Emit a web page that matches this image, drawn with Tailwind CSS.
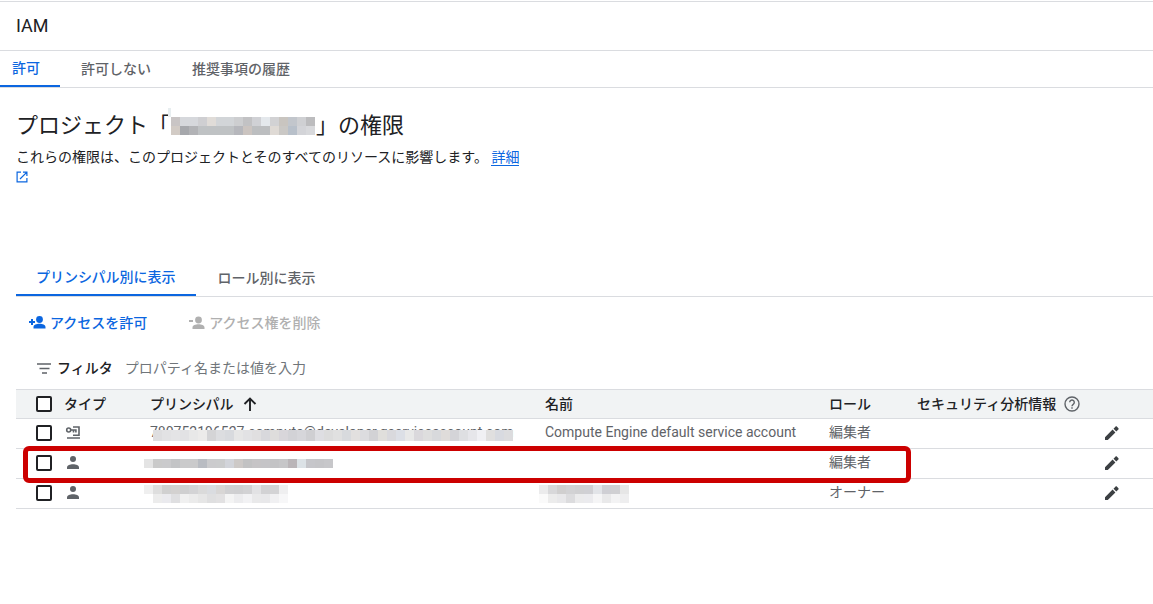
<!DOCTYPE html>
<html lang="ja">
<head>
  <meta charset="utf-8">
  <meta name="viewport" content="width=device-width, initial-scale=1">
  <title>IAM</title>
  <script src="https://cdn.jsdelivr.net/npm/@tailwindcss/browser@4"></script>
</head>
<body class="bg-white font-[Roboto,'Noto_Sans_CJK_JP',sans-serif] text-sm text-[#202124]">

  <header class="mt-px flex h-[50px] items-center border-y border-[#dadce0] px-4">
    <h1 class="text-lg">IAM</h1>
  </header>

  <nav class="flex h-[37px] gap-px border-b border-[#dadce0] font-medium text-[#5f6368]">
    <a href="#allow" class="-ml-2 flex items-center border-b-2 border-[#0b66e0] px-5 text-[#0b66e0]">許可</a>
    <a href="#deny" class="flex items-center px-5">許可しない</a>
    <a href="#history" class="flex items-center px-5">推奨事項の履歴</a>
  </nav>

  <main class="pl-4">
    <h2 class="mt-[22px] flex h-8 items-center text-[22px]">
      プロジェクト「<svg data-mosaic="project" class="-mr-px ml-px h-[18px] w-[146px] overflow-visible"></svg>」の権限
    </h2>
    <p class="mt-[5px] leading-5">
      これらの権限は、このプロジェクトとそのすべてのリソースに影響します。
      <a href="#details" class="text-[#0b66e0]"><span class="border-b border-[#0b66e0]">詳細</span>
        <svg class="mt-1 block size-3" viewBox="0 0 12 12" fill="none" stroke="currentColor" stroke-width="1.2">
          <path d="M5 1.1H1.1v9.8h9.8V7M7 1.1h3.9V5M10.7 1.3 4 8"/>
        </svg>
      </a>
    </p>

    <nav class="mt-[77px] flex h-[37px] gap-0.5 border-b border-[#dadce0] font-medium text-[#5f6368]">
      <a href="#principals" class="flex items-center border-b-2 border-[#0b66e0] px-5 text-[#0b66e0]">プリンシパル別に表示</a>
      <a href="#roles" class="flex items-center px-5">ロール別に表示</a>
    </nav>

    <div class="flex h-[52px] items-center gap-10 pl-3 font-medium">
      <button type="button" class="flex items-center gap-1 text-[#0b66e0]">
        <svg class="h-4 w-[18px]" viewBox="0 0 18 16" fill="currentColor">
          <circle cx="11.5" cy="4.5" r="3.4"/>
          <path d="M5.5 13.500v-1.600c0-2 3-3.200 6-3.200s6 1.200 6 3.200v1.600zM3 4h2v2h2v2H5v2H3V8H1V6h2z"/>
        </svg>
        アクセスを許可
      </button>
      <button type="button" disabled class="flex items-center gap-1 text-[#b0b0b0]">
        <svg class="h-4 w-[18px]" viewBox="0 0 18 16" fill="currentColor">
          <circle cx="11.5" cy="5" r="3.4"/>
          <path d="M5.5 14v-1.6c0-2 3-3.2 6-3.2s6 1.2 6 3.2V14zM2 5h4v2H2z"/>
        </svg>
        アクセス権を削除
      </button>
    </div>

    <div class="flex h-10 items-center pb-0.5 pl-5">
      <svg class="mr-1 h-4 w-[17px]" viewBox="0 0 17 16" fill="none" stroke="#5f6368" stroke-width="1.6">
        <path d="M1 4h14M3.5 8.5h10M6 13h5"/>
      </svg>
      <label for="filter" class="font-medium">フィルタ</label>
      <input id="filter" type="text" placeholder="プロパティ名または値を入力" class="ml-3 grow outline-none placeholder:text-[#70757a]">
    </div>

    <div class="relative">
      <table class="w-full table-fixed border-collapse text-left leading-5">
        <colgroup>
          <col class="w-[48px]"><col class="w-[86px]"><col class="w-[395px]"><col class="w-[284px]">
          <col class="w-[88px]"><col class="w-[187px]"><col>
        </colgroup>
        <thead>
          <tr class="h-[29px] border-y border-[#dadce0] bg-[#f1f3f4]">
            <th class="pl-5"><input type="checkbox" aria-label="すべて選択" class="block size-4 appearance-none rounded-xs border-2 border-[#202124] bg-white"></th>
            <th class="font-medium">タイプ</th>
            <th class="font-medium">
              <div class="flex items-center gap-2">プリンシパル
                <svg class="size-4" viewBox="0 0 16 16" fill="none" stroke="currentColor" stroke-width="1.9"><path d="M8 15V3M2.5 8 8 2.5 13.5 8"/></svg>
              </div>
            </th>
            <th class="font-medium">名前</th>
            <th class="font-medium">ロール</th>
            <th class="font-medium">
              <div class="flex items-center gap-2">セキュリティ分析情報
                <svg class="size-4" viewBox="0 0 16 16" fill="none" stroke="#5f6368" stroke-width="1.4">
                  <circle cx="8" cy="8" r="7"/>
                  <path d="M5.7 6.3a2.3 2.3 0 1 1 3.5 2C8.3 8.9 8 9.2 8 10.2M8 11.3v1.5"/>
                </svg>
              </div>
            </th>
            <th></th>
          </tr>
        </thead>
        <tbody class="text-[#5f6368]">
          <tr class="h-[30px] border-b border-[#dadce0]">
            <td class="pb-0.5 pl-5"><input type="checkbox" aria-label="サービス アカウントを選択" class="block size-4 appearance-none rounded-xs border-2 border-[#202124]"></td>
            <td class="pb-0.5">
              <svg class="block h-4 w-[17px]" viewBox="0 0 17 16" fill="none" stroke="currentColor" stroke-width="1.6">
                <circle cx="4.7" cy="5" r="2"/>
                <path d="M6.7 5h6M9.5 5v2.600M11.9 5v2.600M9 2h6v8.200H9M3 13h13"/>
              </svg>
            </td>
            <td class="pb-1">
              <div class="relative">780752196527-compute@developer.gserviceaccount.com
                <svg data-mosaic="service" class="absolute top-2 left-[3px] h-[11px] w-[360px]"></svg>
              </div>
            </td>
            <td class="pb-1">Compute Engine default service account</td>
            <td class="pb-1">編集者</td>
            <td></td>
            <td class="pb-0.5">
              <button type="button" aria-label="編集" class="block text-[#3c4043]">
                <svg class="size-4" viewBox="0 0 16 16" fill="currentColor"><path d="M1 12.2V15h2.8l7.6-7.6L8.600 4.600zM9.500 3.700 12.300 6.500l2.100-2.100c.4-.4.4-.8 0-1.200l-1.600-1.600c-.4-.4-.8-.4-1.200 0z"/></svg>
              </button>
            </td>
          </tr>
          <tr class="h-[30px] border-b border-[#dadce0]">
            <td class="pb-0.5 pl-5"><input type="checkbox" aria-label="ユーザー 1 を選択" class="block size-4 appearance-none rounded-xs border-2 border-[#202124]"></td>
            <td class="pb-0.5">
              <svg class="block h-4 w-[17px]" viewBox="0 0 17 16" fill="currentColor"><circle cx="9" cy="4" r="3"/><path d="M3 14v-1.5c0-2 3-3.2 6-3.2s6 1.2 6 3.2V14z"/></svg>
            </td>
            <td><svg data-mosaic="user" class="-ml-1.5 h-[9px] w-[189px]"></svg></td>
            <td></td>
            <td class="pb-1">編集者</td>
            <td></td>
            <td class="pb-0.5">
              <button type="button" aria-label="編集" class="block text-[#3c4043]">
                <svg class="size-4" viewBox="0 0 16 16" fill="currentColor"><path d="M1 12.2V15h2.8l7.6-7.6L8.600 4.600zM9.500 3.700 12.300 6.500l2.100-2.100c.4-.4.4-.8 0-1.200l-1.600-1.600c-.4-.4-.8-.4-1.200 0z"/></svg>
              </button>
            </td>
          </tr>
          <tr class="h-[30px] border-b border-[#dadce0]">
            <td class="pb-0.5 pl-5"><input type="checkbox" aria-label="ユーザー 2 を選択" class="block size-4 appearance-none rounded-xs border-2 border-[#202124]"></td>
            <td class="pb-0.5">
              <svg class="block h-4 w-[17px]" viewBox="0 0 17 16" fill="currentColor"><circle cx="9" cy="4" r="3"/><path d="M3 14v-1.5c0-2 3-3.2 6-3.2s6 1.2 6 3.2V14z"/></svg>
            </td>
            <td><svg data-mosaic="owner" class="-ml-1.5 h-[18px] w-[144px]"></svg></td>
            <td><svg data-mosaic="ownerName" class="-ml-1.5 h-[18px] w-[90px]"></svg></td>
            <td class="pb-1">オーナー</td>
            <td></td>
            <td class="pb-0.5">
              <button type="button" aria-label="編集" class="block text-[#3c4043]">
                <svg class="size-4" viewBox="0 0 16 16" fill="currentColor"><path d="M1 12.2V15h2.8l7.6-7.6L8.600 4.600zM9.500 3.700 12.300 6.500l2.100-2.100c.4-.4.4-.8 0-1.200l-1.600-1.600c-.4-.4-.8-.4-1.200 0z"/></svg>
              </button>
            </td>
          </tr>
        </tbody>
      </table>
      <!-- Highlight around the second principal -->
      <div class="pointer-events-none absolute top-[57px] left-[7px] h-[37px] w-[888px] rounded-md border-5 border-[#cc0000]"></div>
    </div>
  </main>

  <script>
    // Redacted values: one list of cell colours per row
    const mosaics = {
      project: [
        'c9c5c5 d6d8dc d6d8dc cfcfd2 e0dcd8 d2d5d8 d2d5d8 cdced0 c2c2c4 d0d1d5 e4e8ec d2d2d4 c9c5c0 c2c6cc cfd0d3 bcbcbe',
        'd2cbc5 a6a8ac b2b3b6 bfc2c4 bfc2c4 bfc2c4 bfc2c4 b6b7bc cbc4c0 bcbec0 bcbec0 dfdad5 cac8c5 b8c0ca d3d4d8 d8d9dc'
      ],
      service: [
        'dedee0 e2e2e4 e4e4e6 e2e2e4 e8e8e8 ecebea d4d4d6 dcdde0 d8dade e6e6e6 e2e2e4 e0dfe0 d8d8dc dedddc d8d6da d2d2d6 d6d6da cfcfd2 dedee2 dcdcdc e0e0e0 d8dadd e2e0df dcdcdf d2d2d5 e0dfdc d9d9dd dcdfe6 e8e8e8 dad8dc dedede d8d9dc dfdcda d4d4d8 dedfe2 e6e6ea f0f0f4 e0dfdf d8dae0 dcdcde'
      ],
      user: [
        'e4e4e4 cacaca cacacc c3c4c6 cacacb cacacb b9bcc2 cbcbcd cbcccd d2d4da cdc9c7 c2c2c3 c6c4c6 c5c4c7 c3c3c5 c6c6c8 bab5b8 dce2e6 c6c6ca c5c5c8 c7c7ca'
      ],
      owner: [
        'efefef dedede d0d0d0 d3d1d0 cfcfd0 d3d3d5 dadada dadce0 d8d6d5 d0d0d2 cfcfd1 d2d2d4 e2e2e4 d2d2d4 d3d3d5 efeff0',
        'ffffff ececec eaeaee dfdfe1 f0f0f0 ebebeb e6e6e6 dfdfe0 e2e1e2 f4f4f4 ececee f2f2f4 e9e9ea e8e8ea f0f0f2 f7f7f8'
      ],
      ownerName: [
        'ebebec d8d8da d0cfcf d2d2d4 d0d0d2 d0d0d4 e2e4e8 cfcfd4 d0d0d3 e6e6e6',
        'fafafa ececec e8e8ea dcdcde ebebec ebebee f5f5f6 e9e9ea f3f3f4 eeeeef'
      ]
    };

    document.querySelectorAll('[data-mosaic]').forEach((svg) => {
      const name = svg.dataset.mosaic;
      const height = name === 'service' ? 11 : 9;
      svg.setAttribute('shape-rendering', 'crispEdges');
      svg.innerHTML = mosaics[name].map((row, y) => row.split(' ').map((color, x) =>
        `<rect x="${x * 9}" y="${y * height}" width="9" height="${height}" fill="#${color}"/>`
      ).join('')).join('');
      // the project name has a stray cell above its first letter
      if (name === 'project') {
        svg.innerHTML += '<rect x="-3" y="-9" width="3" height="9" fill="#e8eef0"/>';
      }
    });
  </script>
</body>
</html>
